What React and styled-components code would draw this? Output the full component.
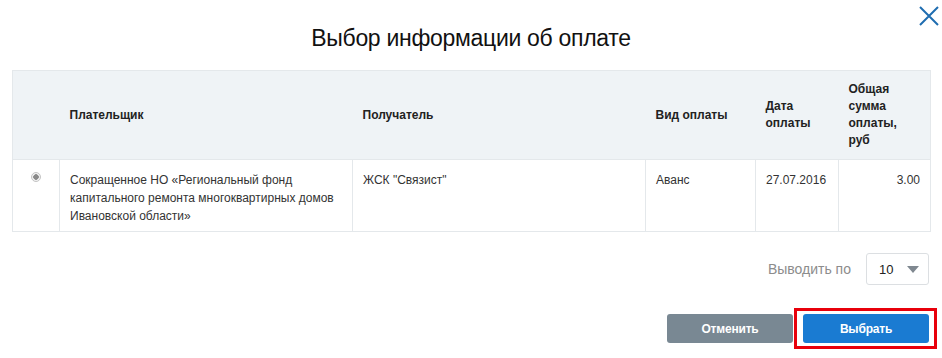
import React from 'react';
import styled, { createGlobalStyle } from 'styled-components';

const Global = createGlobalStyle`
  html, body { margin: 0; padding: 0; background: #fff; }
  body { font-family: 'Liberation Sans', Arial, sans-serif; color: #222; }
`;

const Modal = styled.div`
  position: relative;
  width: 942px;
  height: 358px;
  box-sizing: border-box;
  padding: 0 12px;
`;

const Close = styled.button`
  position: absolute;
  top: 5px;
  right: 2px;
  width: 22px;
  height: 22px;
  padding: 0;
  border: 0;
  background: none;
  cursor: pointer;
`;

const Title = styled.h1`
  margin: 0;
  height: 70px;
  box-sizing: border-box;
  padding-top: 23px;
  text-align: center;
  font-family: 'Liberation Sans', Arial, sans-serif;
  font-size: 23px;
  font-weight: normal;
  letter-spacing: -0.3px;
  color: #111;
  line-height: 30px;
`;

const Table = styled.table`
  width: 918px;
  border-collapse: collapse;
  table-layout: fixed;
  font-size: 12px;
`;

const Th = styled.th`
  height: 89px;
  box-sizing: border-box;
  padding: 0 10px;
  background: #eff3f6;
  border: 1px solid #e4e8eb;
  border-left: ${p => (p.$first ? '1px solid #e4e8eb' : '0')};
  border-right: ${p => (p.$last ? '1px solid #e4e8eb' : '0')};
  text-align: left;
  vertical-align: middle;
  font-weight: bold;
  line-height: 17px;
  color: #222;
`;

const Td = styled.td`
  height: 72px;
  box-sizing: border-box;
  padding: 11px 10px 0;
  border: 1px solid #e4e8eb;
  vertical-align: top;
  text-align: ${p => p.$align || 'left'};
  line-height: 18px;
  font-size: 12px;
  color: #333;
`;

const Radio = styled.span`
  display: block;
  width: 10px;
  height: 10px;
  margin: 1px 0 0 8px;
  border-radius: 50%;
  border: 1px solid #c4c4c4;
  background: radial-gradient(circle, #8a8a8a 0 2.5px, #f1f1f1 3px);
  box-sizing: border-box;
`;

const Pager = styled.div`
  display: flex;
  justify-content: flex-end;
  align-items: center;
  gap: 15px;
  margin-top: 21px;
  padding-right: 1px;
`;

const PagerLabel = styled.span`
  font-size: 14px;
  color: #8c8c8c;
`;

const Select = styled.div`
  display: flex;
  align-items: center;
  justify-content: space-between;
  width: 63px;
  height: 32px;
  box-sizing: border-box;
  padding: 0 9px 0 12px;
  border: 1px solid #dcdfe2;
  border-radius: 3px;
  font-size: 13px;
  color: #222;
`;

const Caret = styled.span`
  width: 0;
  height: 0;
  border-left: 6px solid transparent;
  border-right: 6px solid transparent;
  border-top: 7px solid #7f8890;
`;

const Actions = styled.div`
  display: flex;
  justify-content: flex-end;
  align-items: center;
  gap: 1px;
  margin: 23px -7px 0 0;
`;

const Button = styled.button`
  width: 126px;
  height: 29px;
  border: 0;
  border-radius: 3px;
  background: ${p => (p.$primary ? '#1a7bd2' : '#798893')};
  color: #fff;
  font-family: 'Liberation Sans', Arial, sans-serif;
  font-weight: bold;
  font-size: 12px;
  letter-spacing: -0.2px;
  cursor: pointer;
`;

const Highlight = styled.div`
  display: flex;
  padding: 3px 5px 3px 6px;
  border: 3px solid #e8000b;
`;

export default function App() {
  return (
    <>
      <Global />
      <Modal>
        <Close aria-label="Закрыть">
          <svg width="22" height="22" viewBox="0 0 22 22">
            <path d="M2 2 L20 20 M20 2 L2 20" stroke="#1f6db0" strokeWidth="2" fill="none" />
          </svg>
        </Close>
        <Title>Выбор информации об оплате</Title>
        <Table>
          <colgroup>
            <col style={{ width: 47 }} />
            <col style={{ width: 293 }} />
            <col style={{ width: 293 }} />
            <col style={{ width: 110 }} />
            <col style={{ width: 83 }} />
            <col style={{ width: 92 }} />
          </colgroup>
          <thead>
            <tr>
              <Th $first />
              <Th>Плательщик</Th>
              <Th>Получатель</Th>
              <Th>Вид оплаты</Th>
              <Th>Дата оплаты</Th>
              <Th $last>Общая сумма оплаты, руб</Th>
            </tr>
          </thead>
          <tbody>
            <tr>
              <Td><Radio /></Td>
              <Td>Сокращенное НО «Региональный фонд капитального ремонта многоквартирных домов Ивановской области»</Td>
              <Td>ЖСК "Связист"</Td>
              <Td>Аванс</Td>
              <Td>27.07.2016</Td>
              <Td $align="right">3.00</Td>
            </tr>
          </tbody>
        </Table>
        <Pager>
          <PagerLabel>Выводить по</PagerLabel>
          <Select>
            10
            <Caret />
          </Select>
        </Pager>
        <Actions>
          <Button>Отменить</Button>
          <Highlight>
            <Button $primary>Выбрать</Button>
          </Highlight>
        </Actions>
      </Modal>
    </>
  );
}
